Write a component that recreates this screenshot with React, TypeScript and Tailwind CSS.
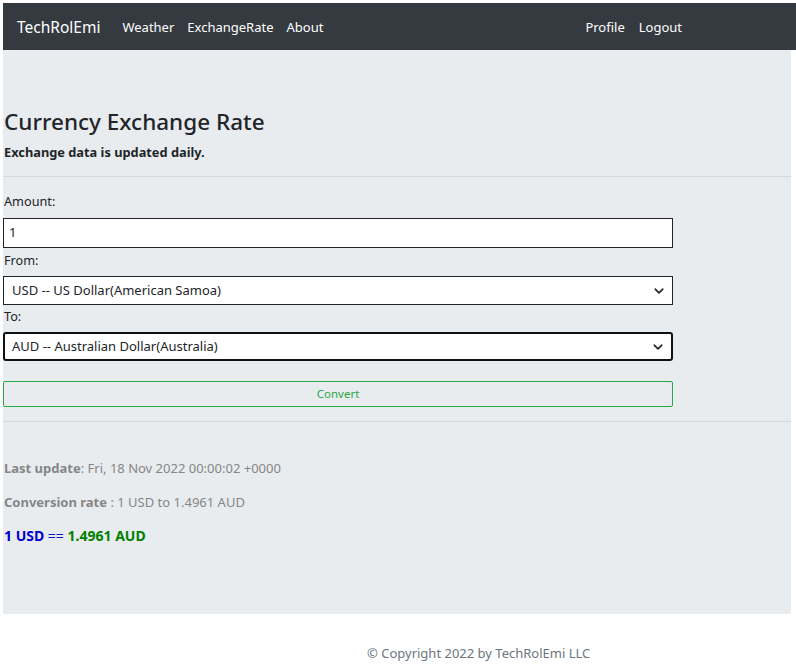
import React from "react";

const Chevron = () => (
  <svg width="12" height="10" viewBox="0 0 16 16" className="absolute right-[7px] top-1/2 -translate-y-1/2">
    <path d="M2 5l6 6 6-6" fill="none" stroke="#212529" strokeWidth="2.6" strokeLinecap="round" strokeLinejoin="round" />
  </svg>
);

export default function App() {
  return (
    <div className="pt-[3px] pl-[3px] bg-white w-[796px] h-[666px] overflow-hidden text-[#212529]" style={{ fontFamily: '"Noto Sans", "Open Sans", sans-serif' }}>
      <nav className="h-[47px] w-[793px] bg-[#343a40] flex items-center justify-between pr-[114px] pt-[2px]">
        <div className="flex items-center">
          <span className="ml-[14px] text-[15.5px] text-white">TechRolEmi</span>
          <div className="flex ml-[22px] gap-[13px] text-[13px] text-white">
            <span>Weather</span>
            <span>ExchangeRate</span>
            <span>About</span>
          </div>
        </div>
        <div className="flex gap-[14px] text-[13px] text-white">
          <span>Profile</span>
          <span>Logout</span>
        </div>
      </nav>
      <main className="bg-[#e9ecef] w-[788px] h-[564px] flex flex-col">
        <div className="h-[57px]" />
        <h1 className="h-[30px] leading-[30px] text-[22.5px] font-medium pl-[1px]">Currency Exchange Rate</h1>
        <div className="h-[6px]" />
        <p className="h-[18px] leading-[18px] text-[12.8px] font-bold pl-[1px]">Exchange data is updated daily.</p>
        <div className="h-[15px]" />
        <hr className="border-0 border-t border-[#d4d8dc]" />
        <div className="h-[15px]" />
        <label className="h-[18px] leading-[18px] text-[12.7px] pl-[1px]">Amount:</label>
        <div className="h-[8px]" />
        <div className="w-[670px] h-[30px] bg-white border border-[#212529] flex items-center pl-[5px] text-[13px]">1</div>
        <div className="h-[3px]" />
        <label className="h-[18px] leading-[18px] text-[12.7px] pl-[1px]">From:</label>
        <div className="h-[7px]" />
        <div className="relative w-[670px] h-[29px] bg-white border border-[#212529] flex items-center pl-[8px] text-[13px]">
          USD -- US Dollar(American Samoa)
          <Chevron />
        </div>
        <div className="h-[2px]" />
        <label className="h-[18px] leading-[18px] text-[12.7px] pl-[1px]">To:</label>
        <div className="h-[7px]" />
        <div className="relative w-[670px] h-[29px] bg-white border-2 border-[#111] rounded-[3px] flex items-center pl-[7px] text-[13px]">
          AUD -- Australian Dollar(Australia)
          <Chevron />
        </div>
        <div className="h-[20px]" />
        <div className="w-[670px] h-[26px] border border-[#28a745] rounded-[2px] flex items-center justify-center text-[11.5px] text-[#28a745]">Convert</div>
        <div className="h-[14px]" />
        <hr className="border-0 border-t border-[#d4d8dc]" />
        <div className="h-[37px]" />
        <p className="h-[18px] leading-[18px] text-[13px] text-[#868686] pl-[1px]"><b>Last update</b>: Fri, 18 Nov 2022 00:00:02 +0000</p>
        <div className="h-[16px]" />
        <p className="h-[18px] leading-[18px] text-[13px] text-[#868686] pl-[1px]"><b>Conversion rate</b> : 1 USD to 1.4961 AUD</p>
        <div className="h-[16px]" />
        <p className="h-[18px] leading-[18px] text-[14px] pl-[1px]">
          <b className="text-[#0000cd]">1 USD</b> <span className="text-[#0000cd]">==</span> <b className="text-[#008000]">1.4961 AUD</b>
        </p>
      </main>
      <footer className="h-[75px] flex items-center text-[13px] text-[#6c757d]">
        <span className="ml-[364px] mt-[5px]">© Copyright 2022 by TechRolEmi LLC</span>
      </footer>
    </div>
  );
}
